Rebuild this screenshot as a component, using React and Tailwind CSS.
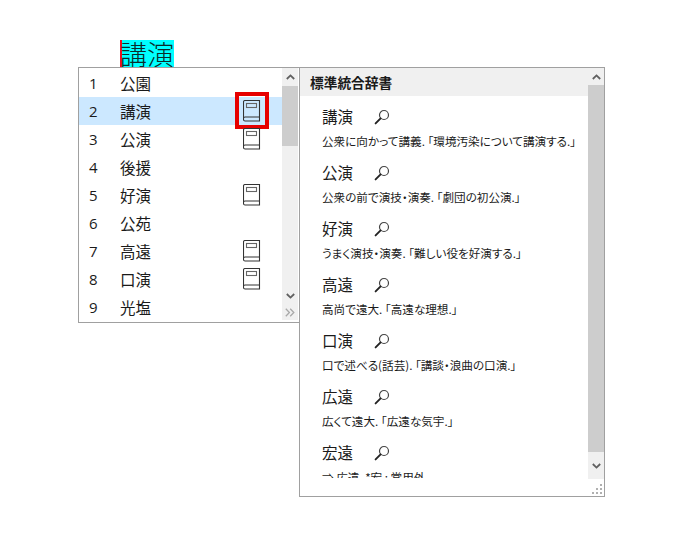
const cjk = { fontFamily: '"Noto Sans CJK JP", sans-serif' };

const rows = [
  ['1', '公園', false],
  ['2', '講演', true],
  ['3', '公演', true],
  ['4', '後援', false],
  ['5', '好演', true],
  ['6', '公苑', false],
  ['7', '高遠', true],
  ['8', '口演', true],
  ['9', '光塩', false],
];

const entries = [
  ['講演', '公衆に向かって講義. 「環境汚染について講演する.」'],
  ['公演', '公衆の前で演技・演奏. 「劇団の初公演.」'],
  ['好演', 'うまく演技・演奏. 「難しい役を好演する.」'],
  ['高遠', '高尚で遠大. 「高遠な理想.」'],
  ['口演', '口で述べる(話芸). 「講談・浪曲の口演.」'],
  ['広遠', '広くて遠大. 「広遠な気宇.」'],
  ['宏遠', '⇒ 広遠. *宏 : 常用外'],
];

function Book() {
  return (
    <svg width="18" height="22" viewBox="0 0 18 22" fill="none" stroke="#333" strokeWidth="1.1">
      <path d="M.5 18.5V2a1.5 1.5 0 0 1 1.5-1.5h14.5v20.5H2A1.5 1.5 0 0 1 .5 19.5v-1A1.5 1.5 0 0 1 2 17h14.5" />
      <rect x="3.5" y="3.5" width="10" height="4" stroke="#666" />
    </svg>
  );
}

function Search() {
  return (
    <svg width="16" height="16" viewBox="0 0 16 16" fill="none" strokeLinecap="round">
      <circle cx="10" cy="6" r="4.5" stroke="#444" strokeWidth="1.2" />
      <path d="M6.6 9.4 1.6 14.4" stroke="#222" strokeWidth="1.9" />
    </svg>
  );
}

function Chevron({ down }) {
  return (
    <svg width="9" height="6" viewBox="0 0 9 6" fill="none" stroke="#606060" strokeWidth="1.8">
      <path d={down ? 'M.8 1 4.5 4.6 8.2 1' : 'M.8 5 4.5 1.4 8.2 5'} />
    </svg>
  );
}

function DoubleChevron() {
  return (
    <svg width="10" height="9" viewBox="0 0 10 9" fill="none" stroke="#a8a8a8" strokeWidth="1.3">
      <path d="M.8.8 4.4 4.5.8 8.2M5.2.8 8.8 4.5 5.2 8.2" />
    </svg>
  );
}

function Grip() {
  const dots = [[8, 0], [4, 4], [8, 4], [0, 8], [4, 8], [8, 8]];
  return (
    <svg width="10" height="10" viewBox="0 0 10 10" fill="#b0b0b0">
      {dots.map(([x, y]) => (
        <rect key={`${x}-${y}`} x={x} y={y} width="2" height="2" />
      ))}
    </svg>
  );
}

export default function App() {
  return (
    <div className="w-[681px] h-[549px] bg-white pt-[40px] overflow-hidden text-[#1a1a1a]" style={cjk}>
      <div className="ml-[120px] w-[54px] h-[27px] bg-[#00ffff] border-l-2 border-[#e81123] flex items-center text-[27px] leading-[27px] font-light text-[#0a2a2a] whitespace-nowrap -indent-[2px]">
        講演
      </div>
      <div className="ml-[78px] flex items-start">
        <div className="w-[222px] h-[256px] border border-[#a0a0a0] flex bg-white">
          <div className="w-[203px] pt-[1px]">
            {rows.map(([n, word, book], i) => (
              <div key={n} className={`h-[28px] flex items-center ${i === 1 ? 'bg-[#cce8ff]' : ''}`}>
                <span className="w-[42px] pl-[10px] text-[15px]" style={{ fontFamily: '"Open Sans", sans-serif' }}>{n}</span>
                <span className="w-[122px] -ml-px mr-px pt-[2px] text-[15.5px] leading-none whitespace-nowrap">{word}</span>
                {book && (
                  <span className="relative flex">
                    <Book />
                    {i === 1 && <span className="absolute -left-[8px] -top-[8px] w-[34px] h-[37px] border-[4px] border-[#e60000]" />}
                  </span>
                )}
              </div>
            ))}
          </div>
          <div className="w-[16px] flex flex-col h-[253px]">
            <div className="h-[236px] flex flex-col bg-[#f0f0f0]">
              <div className="h-[18px] flex items-center justify-center"><Chevron /></div>
              <div className="h-[60px] bg-[#cdcdcd]" />
              <div className="flex-1" />
              <div className="h-[17px] flex items-center justify-center"><Chevron down /></div>
            </div>
            <div className="h-[16px] bg-[#f0f0f0] flex items-center justify-center"><DoubleChevron /></div>
          </div>
        </div>
        <div className="-ml-px w-[306px] h-[430px] border border-[#a0a0a0] bg-white flex flex-col">
          <div className="h-[411px] flex">
            <div className="flex-1 flex flex-col overflow-hidden">
              <div className="h-[28px] shrink-0 bg-[#f0f0f0] pl-[10px] flex items-center text-[13.7px] font-bold whitespace-nowrap">
                標準統合辞書
              </div>
              <div className="h-[382px] overflow-hidden pt-[7px] pl-[22px]">
                {entries.map(([term, def]) => (
                  <div key={term} className="h-[56px]">
                    <div className="h-[28px] flex items-center">
                      <span className="w-[52px] text-[15.5px] leading-none">{term}</span>
                      <Search />
                    </div>
                    <div className="h-[20px] pt-[1px] flex items-center text-[11.6px] leading-none whitespace-nowrap [font-feature-settings:'palt']">{def}</div>
                  </div>
                ))}
              </div>
            </div>
            <div className="w-[16px] flex flex-col bg-[#f0f0f0]">
              <div className="h-[17px] flex items-center justify-center"><Chevron /></div>
              <div className="h-[367px] bg-[#cdcdcd]" />
              <div className="flex-1 flex items-center justify-center"><Chevron down /></div>
            </div>
          </div>
          <div className="flex-1 flex justify-end items-end pr-[2px] pb-[2px]"><Grip /></div>
        </div>
      </div>
    </div>
  );
}
